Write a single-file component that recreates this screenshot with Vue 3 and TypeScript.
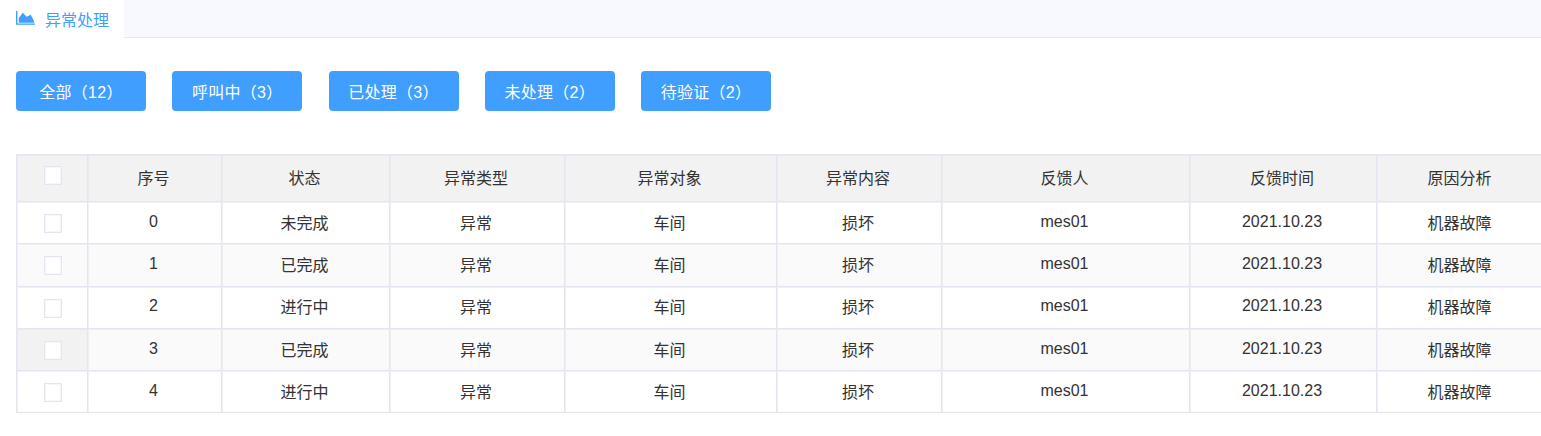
<template>
  <div class="page">
    <header class="tabs">
      <div class="tab">
        <svg class="tab__icon" viewBox="0 0 19 14" width="19" height="14">
          <path d="M0 0H1.4V12.5H19V13.8H0Z" fill="#409eff" />
          <path d="M2.8 11.8V7L6.7 1.7 10.7 5.7 14.7 3.7 18 10V11.8Z" fill="#409eff" />
        </svg>
        <span class="tab__label">异常处理</span>
      </div>
    </header>

    <div class="actions">
      <button v-for="item in filters" :key="item" class="action" type="button">{{ item }}</button>
    </div>

    <div class="table-wrap">
      <table class="grid">
        <colgroup>
          <col v-for="(w, i) in colWidths" :key="i" :style="{ width: w + 'px' }" />
        </colgroup>
        <thead>
          <tr>
            <th class="cell-check"><i class="check"></i></th>
            <th v-for="h in headers" :key="h">{{ h }}</th>
          </tr>
        </thead>
        <tbody>
          <tr v-for="row in rows" :key="row.id" :class="{ 'is-striped': row.id % 2 === 1, 'is-hover': row.id === 3 }">
            <td class="cell-check"><i class="check"></i></td>
            <td>{{ row.id }}</td>
            <td>{{ row.status }}</td>
            <td>异常</td>
            <td>车间</td>
            <td>损坏</td>
            <td>mes01</td>
            <td>2021.10.23</td>
            <td>机器故障</td>
          </tr>
        </tbody>
      </table>
    </div>
  </div>
</template>

<script setup lang="ts">
const filters = ['全部（12）', '呼叫中（3）', '已处理（3）', '未处理（2）', '待验证（2）'];
const headers = ['序号', '状态', '异常类型', '异常对象', '异常内容', '反馈人', '反馈时间', '原因分析'];
const colWidths = [71, 134, 168, 175, 212, 165, 248, 187, 168];
const rows = [
  { id: 0, status: '未完成' },
  { id: 1, status: '已完成' },
  { id: 2, status: '进行中' },
  { id: 3, status: '已完成' },
  { id: 4, status: '进行中' }
];
</script>

<style>
html,
body {
  margin: 0;
  background: #fff;
}
</style>

<style scoped>
.page {
  width: 1541px;
  height: 436px;
  overflow: hidden;
  background: #fff;
  color: #333;
  font-family: 'Liberation Sans', 'Noto Sans CJK SC', sans-serif;
  font-size: 16px;
}

.tabs {
  height: 37px;
  border-bottom: 1px solid #e6e8f0;
  background: #f8f9ff;
}

.tab {
  display: flex;
  align-items: center;
  gap: 10px;
  width: 108px;
  height: 38px;
  padding-left: 16px;
  background: #fff;
  color: #409eff;
  line-height: 38px;
}

.tab__icon {
  margin-top: -2px;
}

.tab__label {
  margin-top: 4px;
}

.actions {
  display: flex;
  gap: 26.25px;
  padding: 33px 16px 43px;
}

.action {
  width: 130px;
  height: 40px;
  padding: 0;
  border: 0;
  border-radius: 4px;
  background: #409eff;
  color: #fff;
  font: inherit;
  letter-spacing: 0.3px;
}

.table-wrap {
  margin-left: 16px;
  overflow: hidden;
}

.grid {
  width: 1528px;
  table-layout: fixed;
  border-collapse: collapse;
  text-align: center;
}

.grid th,
.grid td {
  padding: 0 2px 2px 0;
  border: 1px solid #e4e6ef;
  box-shadow: inset 1px 1px 0 rgba(228, 230, 239, 0.55);
  font-weight: 400;
}

.grid th {
  height: 44px;
  background: #f2f2f2;
}

.grid td {
  height: 39.3px;
}

.grid .cell-check {
  padding: 0 0 2px 2px;
}

.is-striped td {
  background: #fafafa;
}

.is-hover .cell-check {
  background: #f2f2f2;
}

.check {
  display: block;
  box-sizing: border-box;
  width: 18px;
  height: 19px;
  margin: 4px auto 0;
  border: 1px solid #e4e6ef;
  outline: 1px solid rgba(228, 230, 239, 0.3);
  outline-offset: -2px;
  background: #fff;
}

th .check {
  margin-top: -4px;
}
</style>
